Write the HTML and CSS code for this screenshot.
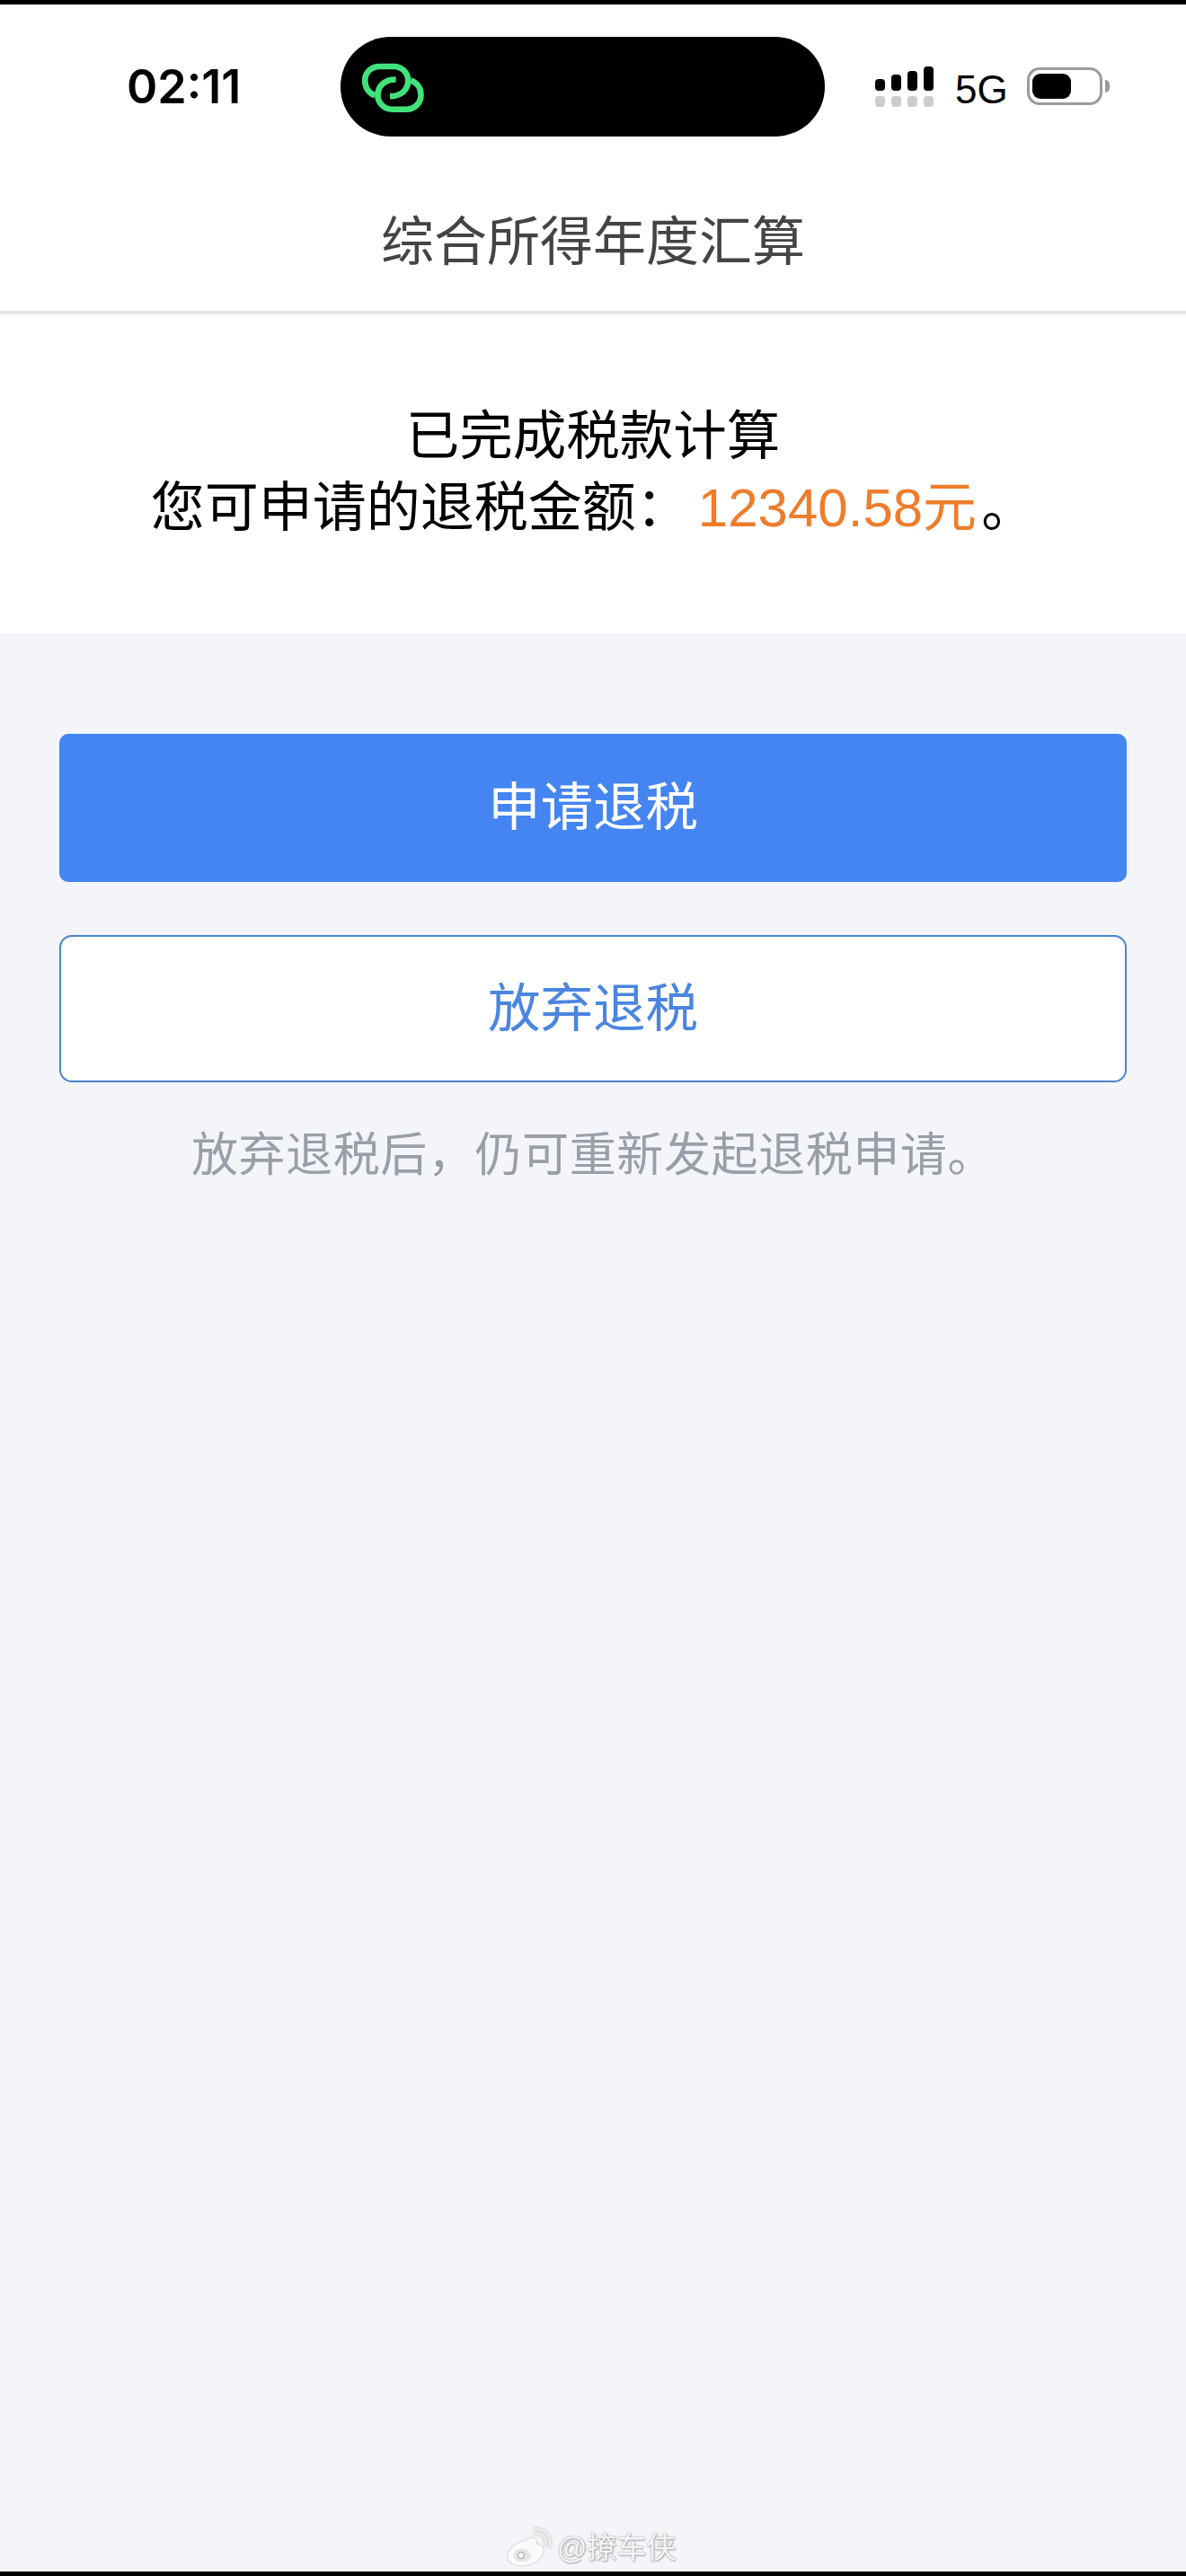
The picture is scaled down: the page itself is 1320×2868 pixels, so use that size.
FILE: index.html
```html
<!DOCTYPE html>
<html lang="zh-CN">
<head>
<meta charset="utf-8">
<title>综合所得年度汇算</title>
<link rel="stylesheet" href="styles.css">
</head>
<body>
<div class="phone">
  <div class="edge"></div>
  <div class="status">
    <div class="time">02:11</div>
    <div class="island">
      <svg class="link-icon" viewBox="120 140 225 175" width="75" height="58">
        <path d="M172 255C150 248 138 228 138 205C138 178 160 158 187 158H235C262 158 283 180 283 205C283 238 258 258 222 258"/>
        <path d="M292 205C314 212 326 232 326 255C326 282 304 302 277 302H229C202 302 181 280 181 255C181 222 206 202 242 202"/>
      </svg>
    </div>
    <div class="signal">
      <div class="bars">
        <i class="bar b1"></i><i class="bar b2"></i><i class="bar b3"></i><i class="bar b4"></i>
      </div>
      <div class="dots"><i></i><i></i><i></i><i></i></div>
    </div>
    <div class="net">5G</div>
    <div class="battery"><div class="level"></div></div>
    <div class="nub"></div>
  </div>
  <header class="nav">综合所得年度汇算</header>
  <section class="result">
    <p>已完成税款计算</p>
    <p class="result-line">您可申请的退税金额：<span class="amount">12340.58元</span>。</p>
  </section>
  <main class="actions">
    <button class="btn primary">申请退税</button>
    <button class="btn secondary">放弃退税</button>
    <p class="hint">放弃退税后，仍可重新发起退税申请。</p>
  </main>
  <div class="edge"></div>
  <div class="watermark">
    <svg class="weibo" viewBox="0 0 48 44" width="48" height="44">
      <path class="wb-body" d="M20 14C26 9 32 10 32 15C32 17 31 18 33 18C38 19 41 23 39 28C36 37 24 42 13 41C5 40 0 36 0 31C0 25 11 14 20 14Z"/>
      <ellipse class="wb-eye" cx="16" cy="30" rx="10" ry="7.5"/>
      <circle class="wb-pupil" cx="15" cy="30" r="3.4"/>
      <path class="wb-arc" d="M31 6C38 5 44 12 42 19"/>
      <path class="wb-arc" d="M30 1C41 -1 50 10 47 21"/>
    </svg>
    <span class="wm-text">@撩车侠</span>
  </div>
</div>
</body>
</html>
```
FILE: styles.css
```css
* { box-sizing: border-box; }
html, body { margin: 0; padding: 0; }
body {
  width: 1320px;
  height: 2868px;
  overflow: hidden;
  font-family: "Liberation Sans", "Noto Sans CJK SC", sans-serif;
}
.phone {
  position: relative;
  width: 1320px;
  height: 2868px;
  display: flex;
  flex-direction: column;
  background: #f3f5f9;
}
.edge { height: 5px; background: #000; flex: none; }
.status {
  height: 185px;
  flex: none;
  background: #fff;
  display: flex;
  align-items: flex-start;
  padding-top: 36px;
  padding-left: 141px;
}
.time {
  width: 238px;
  height: 111px;
  line-height: 111px;
  font-family: Inter, "Liberation Sans", sans-serif;
  font-size: 52px;
  font-weight: 600;
  color: #000;
}
.island {
  width: 539px;
  height: 111px;
  border-radius: 56px / 55px;
  background: #000;
  display: flex;
  align-items: center;
  padding-left: 21px;
}
.link-icon path {
  fill: none;
  stroke: #41e27b;
  stroke-width: 20;
  stroke-linecap: butt;
}
.signal {
  margin-left: 56px;
  margin-top: 33px;
  width: 65px;
  display: flex;
  flex-direction: column;
  gap: 6px;
}
.bars, .dots { display: flex; justify-content: space-between; }
.bars { height: 27px; align-items: flex-end; }
.bar { width: 11px; background: #000; border-radius: 4px; display: block; }
.b1 { height: 13px; }
.b2 { height: 18px; }
.b3 { height: 22px; }
.b4 { height: 27px; }
.dots i { width: 11px; height: 12px; border-radius: 4px; background: #ccc; display: block; }
.net {
  margin-left: 24px;
  margin-top: 39px;
  width: 56px;
  font-size: 44px;
  line-height: 39px;
  color: #000;
}
.battery {
  margin-left: 24px;
  margin-top: 34px;
  width: 84px;
  height: 42px;
  border: 3px solid #9b9b9b;
  border-radius: 14px;
  padding: 4px 3px;
}
.level { width: 43px; height: 28px; border-radius: 9px; background: #000; }
.nub {
  margin-left: 3px;
  margin-top: 48px;
  width: 5px;
  height: 14px;
  background: #999;
  border-radius: 0 5px 5px 0;
}
.nav {
  height: 160px;
  flex: none;
  line-height: 160px;
  background: #fff;
  border-bottom: 4px solid #e6e6e6;
  text-align: center;
  font-size: 59px;
  color: #444;
}
.result {
  height: 355px;
  flex: none;
  background: #fff;
  padding-top: 95px;
  text-align: center;
  font-size: 59.5px;
  line-height: 81px;
  color: #000;
}
.result p { margin: 0; }
.result-line { font-size: 60px; margin-top: -1px; }
.result .result-line { margin-top: -1px; }
.amount { color: #ee7d2b; margin: 0 5px 0 9px; }
.actions {
  flex: 1;
  padding: 112px 66px 0;
  display: flex;
  flex-direction: column;
}
.btn {
  width: 100%;
  padding: 0 0 12px;
  font-family: inherit;
  font-size: 58.5px;
  border-radius: 10px;
  display: block;
}
.primary {
  height: 165px;
  border: 0;
  background: #4485f2;
  color: #fff;
}
.secondary {
  height: 164px;
  margin-top: 59px;
  border: 2px solid #4a86c9;
  background: #fff;
  color: #4a86e0;
  border-radius: 14px;
}
.hint {
  margin: 46px 0 0;
  text-align: center;
  font-size: 52px;
  letter-spacing: 0.6px;
  line-height: 70px;
  color: #9a9ea8;
}
.watermark {
  position: absolute;
  left: 565px;
  top: 2815px;
  display: flex;
  align-items: center;
  gap: 7px;
  height: 44px;
}
.wm-text {
  font-size: 33px;
  line-height: 44px;
  color: #f4f5f8;
  text-shadow: 0 0 2px #9a9a9a, 1px 1px 2px #aaa;
}
.weibo { overflow: visible; filter: drop-shadow(0 0 1px #aaa); }
.wb-body { fill: #fbfbfb; }
.wb-eye { fill: #e6e6e8; }
.wb-pupil { fill: #fafafa; stroke: #b5b5b5; stroke-width: 1.5; }
.wb-arc { fill: none; stroke: #eee; stroke-width: 2.5; stroke-linecap: round; }
```
